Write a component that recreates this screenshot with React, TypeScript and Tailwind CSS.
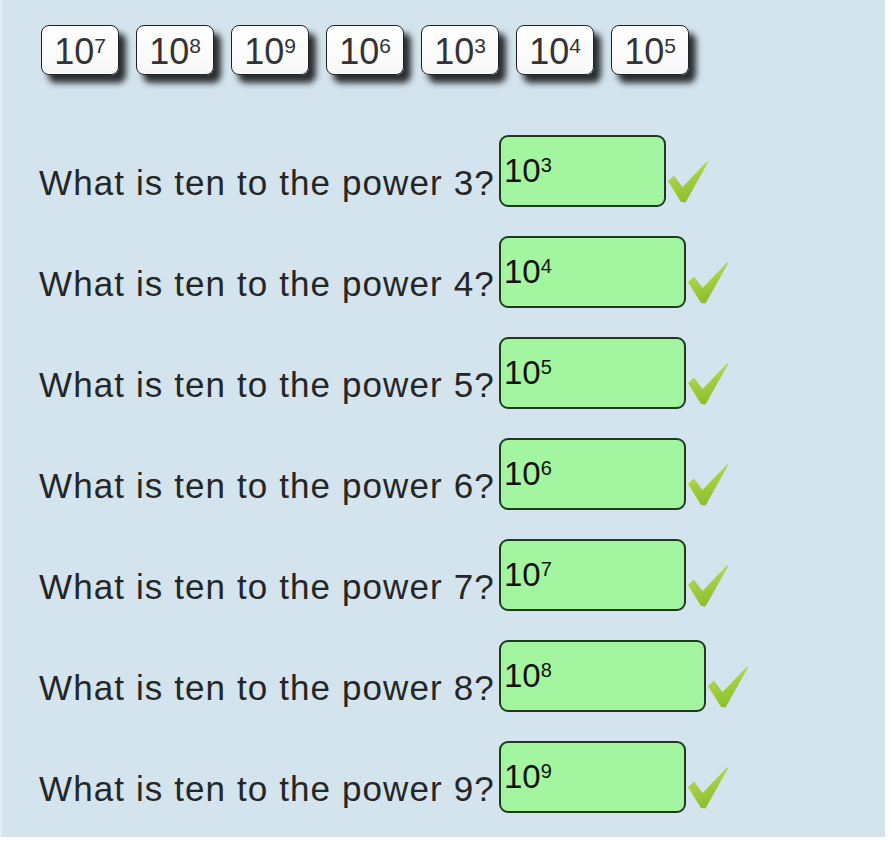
const tiles = ["7", "8", "9", "6", "3", "4", "5"];

const questions = [
  { n: "3", w: "w-[167px]" },
  { n: "4", w: "w-[187px]" },
  { n: "5", w: "w-[187px]" },
  { n: "6", w: "w-[187px]" },
  { n: "7", w: "w-[187px]" },
  { n: "8", w: "w-[207px]" },
  { n: "9", w: "w-[187px]" },
];

function Check() {
  return (
    <svg width="40" height="42" viewBox="0 0 40 42" className="shrink-0">
      <defs>
        <linearGradient id="chk" x1="0" y1="0" x2="0.3" y2="1">
          <stop offset="0" stopColor="#bfe05a" />
          <stop offset="1" stopColor="#8cbf2c" />
        </linearGradient>
      </defs>
      <path d="M0 20 L6 14.5 L14.5 26 L39.5 0 L40 1.5 L17.5 41.5 L13 41 Z" fill="url(#chk)" />
    </svg>
  );
}

export default function App() {
  return (
    <div className="min-h-screen bg-white" style={{ fontFamily: '"Liberation Sans", Arial, sans-serif' }}>
      <div className="w-[885px] h-[837px] bg-[#d3e4ee] border-l-2 border-[#e2eef4] pl-[37px] pt-[25px]">
        {/* Tiles */}
        <div className="flex gap-[17px] pl-[2px]">
          {tiles.map((t) => (
            <div
              key={t}
              className="w-[78px] h-[50px] flex items-center justify-center pt-1 bg-gradient-to-b from-white to-[#f8f8f8] border-[1.5px] border-[#222] rounded-[8px] shadow-[7px_8px_6px_rgba(0,0,0,0.8)] text-[#333]"
            >
              <span className="text-[36px] leading-none">
                10<span className="text-[21px] align-top relative top-[1px]">{t}</span>
              </span>
            </div>
          ))}
        </div>

        {/* Questions */}
        <div className="flex flex-col gap-[29px] mt-[60px]">
          {questions.map((q) => (
            <div key={q.n} className="flex items-end h-[72px]">
              <span className="w-[460px] whitespace-nowrap text-[35px] tracking-[1.1px] leading-none text-[#262626] mb-[7px]">
                What is ten to the power {q.n}?
              </span>
              <div className={`${q.w} h-[72px] bg-[#a4f5a0] border-2 border-[#1f3a1f] rounded-[9px] pl-[3px] pt-[17px] text-[#111]`}>
                <span className="text-[33px] leading-none">
                  10<span className="text-[20px] align-top relative top-[1px]">{q.n}</span>
                </span>
              </div>
              <div className="ml-[2px] mb-[4px]">
                <Check />
              </div>
            </div>
          ))}
        </div>
      </div>
    </div>
  );
}
